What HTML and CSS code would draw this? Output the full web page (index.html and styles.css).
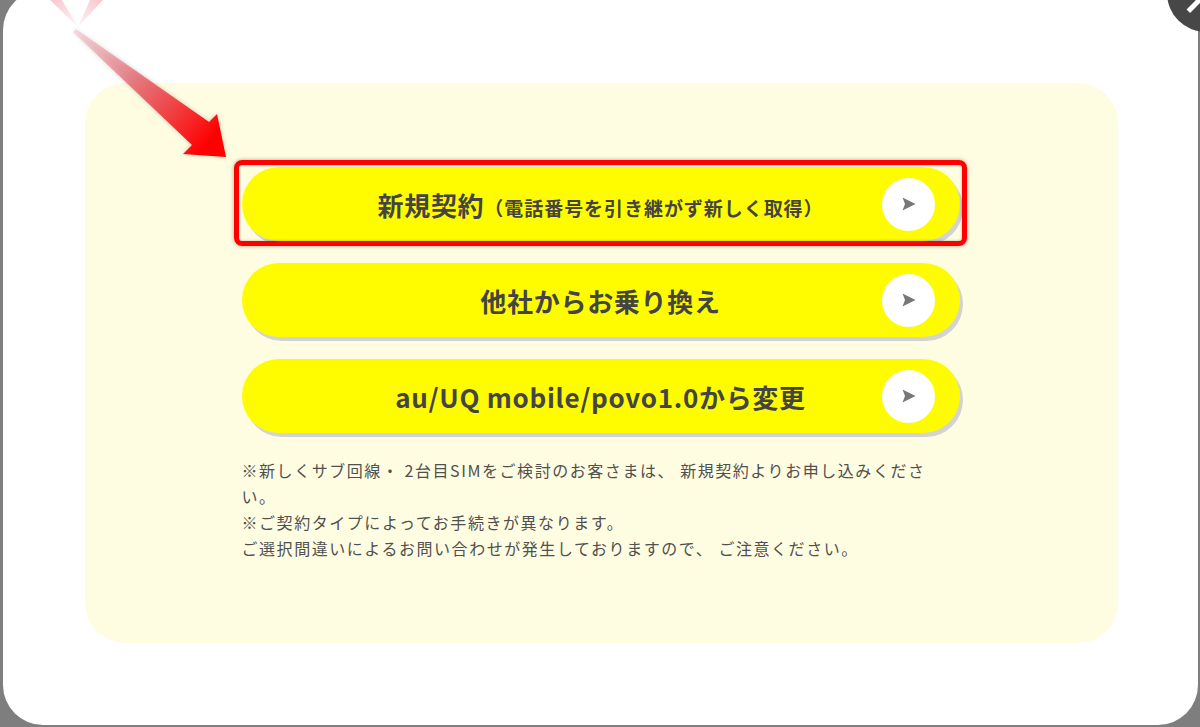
FILE: index.html
```html
<!DOCTYPE html>
<html lang="ja">
<head>
<meta charset="utf-8">
<title>お申し込み方法の選択</title>
<link rel="stylesheet" href="styles.css">
</head>
<body>
<div class="modal">
  <div class="panel">
    <div class="choices">
      <a class="choice" href="#">
        <span class="label"><span class="main">新規契約</span><span class="sub">（電話番号を引き継がず新しく取得）</span></span>
        <span class="go"><svg viewBox="0 0 14 14" width="14" height="14"><polygon points="0.5,0.5 13.5,7 0.5,13.5 3,7" fill="#777"/></svg></span>
      </a>
      <a class="choice" href="#">
        <span class="label"><span class="main">他社からお乗り換え</span></span>
        <span class="go"><svg viewBox="0 0 14 14" width="14" height="14"><polygon points="0.5,0.5 13.5,7 0.5,13.5 3,7" fill="#777"/></svg></span>
      </a>
      <a class="choice" href="#">
        <span class="label"><span class="main">au/UQ mobile/povo1.0から変更</span></span>
        <span class="go"><svg viewBox="0 0 14 14" width="14" height="14"><polygon points="0.5,0.5 13.5,7 0.5,13.5 3,7" fill="#777"/></svg></span>
      </a>
    </div>
    <div class="notes">
      <p>※新しくサブ回線・ 2台目SIMをご検討のお客さまは、 新規契約よりお申し込みください。</p>
      <p>※ご契約タイプによってお手続きが異なります。<br>ご選択間違いによるお問い合わせが発生しておりますので、 ご注意ください。</p>
    </div>
  </div>
</div>

<div class="highlight"></div>

<svg class="pointer" width="240" height="170" viewBox="0 0 240 170">
  <defs>
    <linearGradient id="shaft" gradientUnits="userSpaceOnUse" x1="76" y1="28" x2="210" y2="140">
      <stop offset="0" stop-color="#f4a9b2" stop-opacity="0.35"/>
      <stop offset="0.45" stop-color="#e86a72" stop-opacity="0.85"/>
      <stop offset="1" stop-color="#ff0000"/>
    </linearGradient>
    <linearGradient id="rayL" gradientUnits="userSpaceOnUse" x1="56" y1="0" x2="78" y2="27">
      <stop offset="0" stop-color="#f3a0aa" stop-opacity="0.55"/>
      <stop offset="1" stop-color="#f3a0aa" stop-opacity="0.1"/>
    </linearGradient>
    <linearGradient id="rayR" gradientUnits="userSpaceOnUse" x1="97" y1="0" x2="78" y2="27">
      <stop offset="0" stop-color="#f3a0aa" stop-opacity="0.55"/>
      <stop offset="1" stop-color="#f3a0aa" stop-opacity="0.1"/>
    </linearGradient>
  </defs>
  <polygon points="50,0 62,0 78,27" fill="url(#rayL)"/>
  <polygon points="90,0 103,0 78,27" fill="url(#rayR)"/>
  <polygon class="arrow" points="76,29 209,122 217,114 226,157 183,154 192,145 73,32" fill="url(#shaft)"/>
</svg>

<div class="close"><span class="bar a"></span><span class="bar b"></span></div>
</body>
</html>
```

FILE: styles.css
```css
html, body {
  margin: 0;
  padding: 0;
}
body {
  width: 1200px;
  height: 727px;
  overflow: hidden;
  background: #7e7e7e;
  position: relative;
  font-family: "Noto Sans CJK JP", "Noto Sans", sans-serif;
}
.modal {
  box-sizing: border-box;
  margin: -10px 2px 0 3px;
  height: 735px;
  background: #ffffff;
  border-radius: 40px;
  padding: 93px 80px 0 82px;
}
.panel {
  box-sizing: border-box;
  height: 560px;
  background: #fffde1;
  border-radius: 40px;
  padding-top: 84px;
  display: flex;
  flex-direction: column;
  align-items: center;
}
.choices {
  width: 718px;
  display: flex;
  flex-direction: column;
  gap: 22px;
  margin-left: -2px;
}
.choice {
  height: 74px;
  border-radius: 37px;
  background: #fffc00;
  box-shadow: 3px 4px 0 #d3d3d3;
  display: grid;
  grid-template-columns: 78px 1fr 78px;
  align-items: center;
  text-decoration: none;
  color: #444444;
}
.label {
  grid-column: 2;
  justify-self: center;
  font-weight: 700;
  white-space: nowrap;
  display: flex;
  align-items: baseline;
}
.main {
  font-size: 26px;
  letter-spacing: 0.7px;
}
.sub {
  font-size: 19px;
  letter-spacing: 0.95px;
}
.go {
  grid-column: 3;
  width: 53px;
  height: 53px;
  border-radius: 50%;
  background: #ffffff;
  display: flex;
  align-items: center;
  justify-content: center;
}
.go svg {
  display: block;
  margin-left: 2px;
}
.notes {
  width: 718px;
  margin-top: 24px;
  margin-left: -2px;
  color: #505050;
  font-size: 16px;
  line-height: 26px;
  letter-spacing: 1.55px;
}
.notes p {
  margin: 0;
  width: 700px;
}
.highlight {
  position: absolute;
  left: 234px;
  top: 160px;
  width: 733px;
  height: 86px;
  box-sizing: border-box;
  border: 5px solid #ff0000;
  border-radius: 8px;
  box-shadow: 0 0 4px rgba(0, 0, 0, 0.35), inset 0 0 3px rgba(0, 0, 0, 0.3);
}
.pointer {
  position: absolute;
  left: 0;
  top: 0;
}
.pointer .arrow {
  filter: drop-shadow(0 0 2px rgba(0, 0, 0, 0.25));
}
.close {
  position: absolute;
  left: 1167px;
  top: -46px;
  width: 78px;
  height: 78px;
  border-radius: 50%;
  background: #474747;
}
.close .bar {
  position: absolute;
  left: 14px;
  top: 36.5px;
  width: 50px;
  height: 5px;
  background: #ffffff;
}
.close .bar.a { transform: rotate(-45deg); }
.close .bar.b { transform: rotate(45deg); }
```
